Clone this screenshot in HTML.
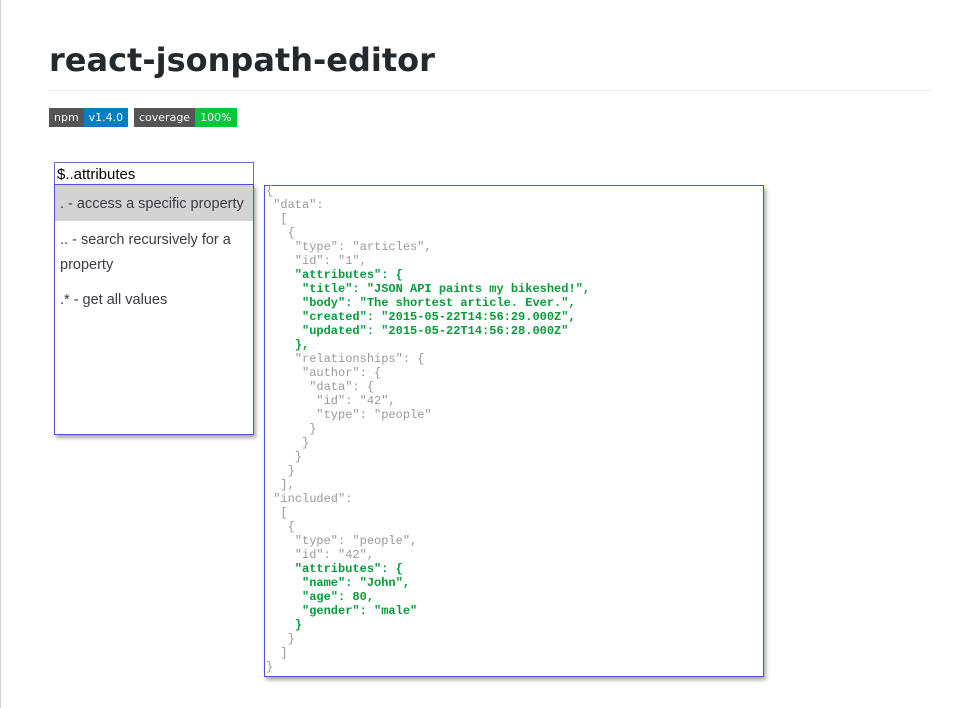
<!DOCTYPE html>
<html><head><style>
body{margin:0;width:978px;height:708px;background:#fff;position:relative;overflow:hidden;font-family:"DejaVu Sans",sans-serif;}
.lb{position:absolute;left:0;top:0;width:1px;height:708px;background:#d0d4d8}
h1{position:absolute;left:49px;top:38px;margin:0;font-size:32px;font-weight:bold;color:#24292e;line-height:44px}
.hr{position:absolute;left:49px;top:90px;width:882px;height:1px;background:#eaecef}
.badge{position:absolute;top:108px;height:19px;font-size:11px;line-height:19px;color:#fff;display:flex}
.badge span{padding:0 5px}
.inp{position:absolute;left:54px;top:162px;height:23px;border:1px solid #6a6ac8;font-family:"Liberation Sans",sans-serif;font-size:15px;line-height:24px;padding-left:2px;box-sizing:border-box;width:200px;color:#000}
.dd{position:absolute;left:54px;top:184px;width:200px;height:251px;border:1px solid #5050e0;box-sizing:border-box;box-shadow:2px 3px 4px rgba(0,0,0,.35);font-family:"Liberation Sans",sans-serif;font-size:14.5px;color:#3a3a44;background:#fff}
.dd div{padding:0 5px;line-height:25px}
.code{position:absolute;left:264px;top:185px;width:500px;height:492px;border:1px solid #5050e0;box-sizing:border-box;box-shadow:2px 3px 4px rgba(0,0,0,.35);background:#fff}
pre{margin:0;padding:0 0 0 1px;font-family:"Liberation Mono",monospace;font-size:12px;line-height:14px;color:#999;position:absolute;top:-2px;left:0}
b{color:#0a9a3a}
</style></head><body>
<div class="lb"></div>
<h1>react-jsonpath-editor</h1>
<div class="hr"></div>
<div class="badge" style="left:49px"><span style="background:#555">npm</span><span style="background:#007ec6">v1.4.0</span></div>
<div class="badge" style="left:134px"><span style="background:#555">coverage</span><span style="background:#00c837">100%</span></div>
<div class="inp">$..attributes</div>
<div class="dd">
<div style="background:#d3d3d3;height:36px;line-height:38px">. - access a specific property</div>
<div style="padding-top:7px">.. - search recursively for a property</div>
<div style="padding-top:10px">.* - get all values</div>
</div>
<div class="code"><pre>{
 "data":
  [
   {
    "type": "articles",
    "id": "1",
<b>    "attributes": {
     "title": "JSON API paints my bikeshed!",
     "body": "The shortest article. Ever.",
     "created": "2015-05-22T14:56:29.000Z",
     "updated": "2015-05-22T14:56:28.000Z"
    },</b>
    "relationships": {
     "author": {
      "data": {
       "id": "42",
       "type": "people"
      }
     }
    }
   }
  ],
 "included":
  [
   {
    "type": "people",
    "id": "42",
<b>    "attributes": {
     "name": "John",
     "age": 80,
     "gender": "male"
    }</b>
   }
  ]
}</pre></div>
</body></html>
